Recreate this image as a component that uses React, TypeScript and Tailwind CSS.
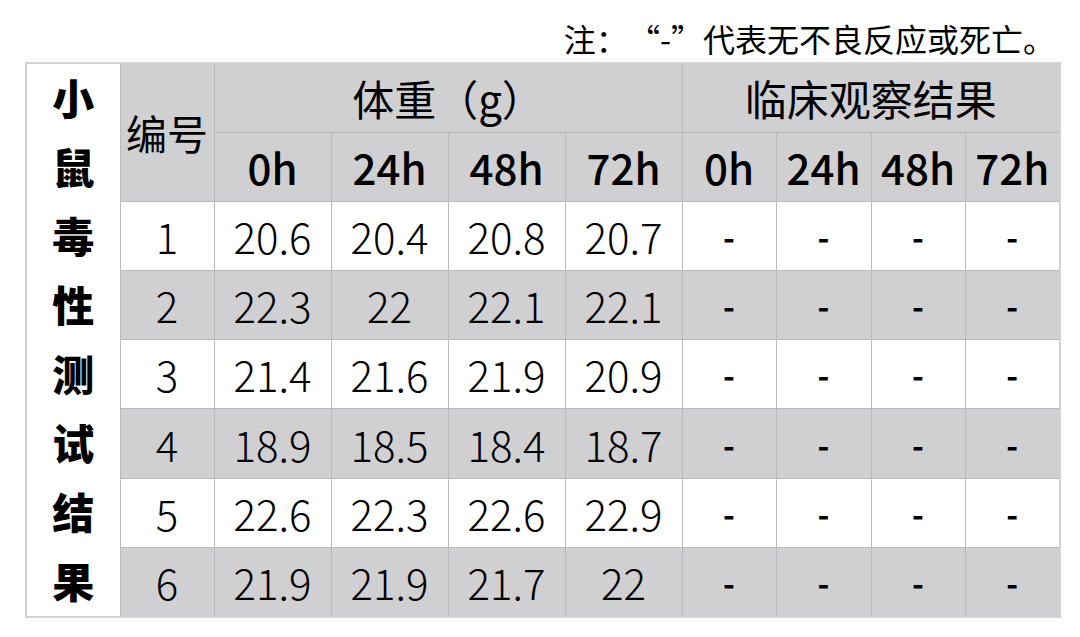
import React from "react";

const rows = [
  ["1", "20.6", "20.4", "20.8", "20.7"],
  ["2", "22.3", "22", "22.1", "22.1"],
  ["3", "21.4", "21.6", "21.9", "20.9"],
  ["4", "18.9", "18.5", "18.4", "18.7"],
  ["5", "22.6", "22.3", "22.6", "22.9"],
  ["6", "21.9", "21.9", "21.7", "22"],
];

const side = ["小", "鼠", "毒", "性", "测", "试", "结", "果"];

export default function App() {
  const cjk = { fontFamily: '"Noto Sans CJK SC", "Noto Sans", sans-serif' };
  const cell = "border border-[#b9b9b9] text-center align-middle p-0 leading-none";
  return (
    <div className="w-[1080px] h-[637px] bg-white text-black" style={cjk}>
      <div className="h-[62px] flex items-end justify-end pr-[25px] pb-[4px] text-[32px] leading-[40px] font-normal">
        <span>注：</span>
        <span>“-”</span>
        <span>代表无不良反应或死亡。</span>
      </div>
      <div className="pl-[25px]">
        <table className="table-fixed border-collapse border-2 border-[#d2d2d2] w-[1034px]">
          <colgroup>
            <col className="w-[94px]" />
            <col className="w-[94px]" />
            <col className="w-[117px]" />
            <col className="w-[117px]" />
            <col className="w-[117px]" />
            <col className="w-[117px]" />
            <col className="w-[94px]" />
            <col className="w-[95px]" />
            <col className="w-[94px]" />
            <col className="w-[95px]" />
          </colgroup>
          <tbody>
            <tr className="h-[69px]">
              <td rowSpan={8} className={`${cell} bg-white`}>
                <div className="flex flex-col">
                  {side.map((c, i) => (
                    <div key={i} className="h-[69px] pb-[4px] flex items-center justify-center text-[42px] font-black leading-none">
                      {c}
                    </div>
                  ))}
                </div>
              </td>
              <td rowSpan={2} className={`${cell} bg-[#d0cfd1] text-[41px] font-normal`}>
                编号
              </td>
              <td colSpan={4} className={`${cell} bg-[#d0cfd1] text-[42px] font-normal`}>
                体重（g）
              </td>
              <td colSpan={4} className={`${cell} bg-[#d0cfd1] text-[42px] font-normal`}>
                临床观察结果
              </td>
            </tr>
            <tr className="h-[69px]">
              {["0h", "24h", "48h", "72h", "0h", "24h", "48h", "72h"].map((h, i) => (
                <td key={i} className={`${cell} bg-[#d0cfd1] text-[42px] font-medium`}>
                  {h}
                </td>
              ))}
            </tr>
            {rows.map((r, i) => (
              <tr key={i} className={`h-[69.3px] ${i % 2 === 1 ? "bg-[#d0cfd1]" : "bg-white"}`}>
                {r.map((v, j) => (
                  <td key={j} className={`${cell} text-[42px] font-light`}>
                    {v}
                  </td>
                ))}
                {[0, 1, 2, 3].map((k) => (
                  <td key={"d" + k} className={`${cell} text-[32px] font-bold`}>
                    -
                  </td>
                ))}
              </tr>
            ))}
          </tbody>
        </table>
      </div>
    </div>
  );
}
